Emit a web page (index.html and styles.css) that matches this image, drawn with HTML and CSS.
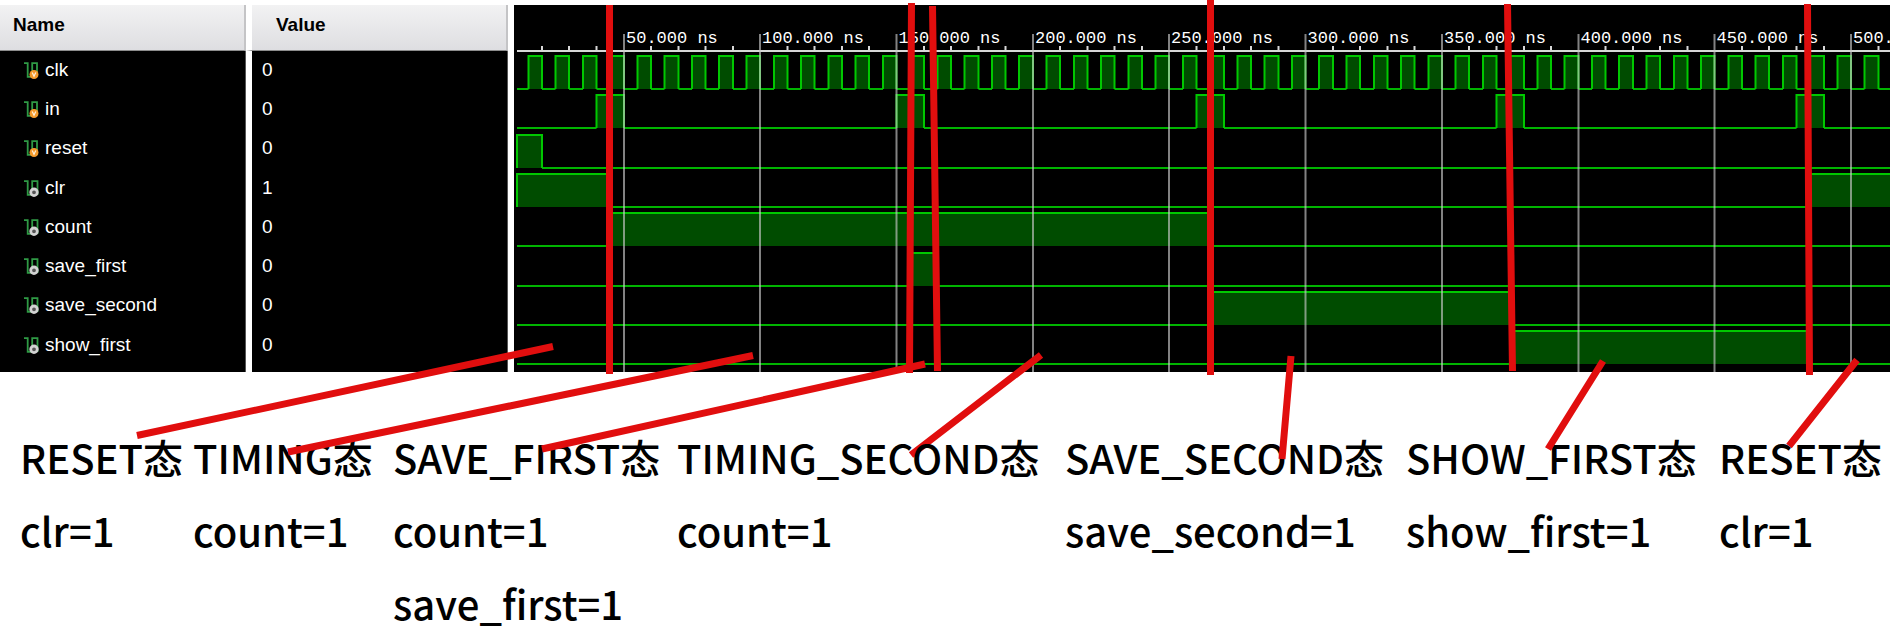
FILE: index.html
```html
<!DOCTYPE html>
<html lang="zh-CN">
<head>
<meta charset="utf-8">
<title>Waveform states</title>
<link rel="stylesheet" href="styles.css">
</head>
<body>
<svg class="symbols" aria-hidden="true">
  <symbol id="sig-in" viewBox="0 0 15 17">
    <path d="M0 1.2H3.7V14.8H8.2V1.2H13V15" fill="none" stroke="#2f9a45" stroke-width="1.8"/>
    <circle cx="10" cy="12.5" r="4.5" fill="#f59a2c"/>
    <path d="M8.2 10.5L10 14.3L11.8 10.5" fill="none" stroke="#fff0d8" stroke-width="1.2"/>
  </symbol>
  <symbol id="sig-reg" viewBox="0 0 15 17">
    <path d="M0 1.2H3.7V14.8H8.2V1.2H13.5V15" fill="none" stroke="#2f9a45" stroke-width="1.8"/>
    <circle cx="10" cy="12.3" r="3.3" fill="#555" stroke="#d2d2d2" stroke-width="2.8"/>
  </symbol>
</svg>
<main class="page">
  <section class="viewer">
    <table class="signals">
      <thead><tr><th scope="col">Name</th><th scope="col">Value</th></tr></thead>
      <tbody>
        <tr><td><svg class="icon"><use href="#sig-in"/></svg>clk</td><td>0</td></tr>
        <tr><td><svg class="icon"><use href="#sig-in"/></svg>in</td><td>0</td></tr>
        <tr><td><svg class="icon"><use href="#sig-in"/></svg>reset</td><td>0</td></tr>
        <tr><td><svg class="icon"><use href="#sig-reg"/></svg>clr</td><td>1</td></tr>
        <tr><td><svg class="icon"><use href="#sig-reg"/></svg>count</td><td>0</td></tr>
        <tr><td><svg class="icon"><use href="#sig-reg"/></svg>save_first</td><td>0</td></tr>
        <tr><td><svg class="icon"><use href="#sig-reg"/></svg>save_second</td><td>0</td></tr>
        <tr><td><svg class="icon"><use href="#sig-reg"/></svg>show_first</td><td>0</td></tr>
      </tbody>
    </table>
    <svg class="wave" id="wave" role="img" aria-label="Signal waveforms"></svg>
  </section>
  <section class="states">
    <div class="state"><p>RESET态</p><p>clr=1</p></div>
    <div class="state"><p>TIMING态</p><p>count=1</p></div>
    <div class="state"><p>SAVE_FIRST态</p><p>count=1</p><p>save_first=1</p></div>
    <div class="state front"><p>TIMING_SECOND态</p><p>count=1</p></div>
    <div class="state"><p>SAVE_SECOND态</p><p>save_second=1</p></div>
    <div class="state"><p>SHOW_FIRST态</p><p>show_first=1</p></div>
    <div class="state"><p>RESET态</p><p>clr=1</p></div>
  </section>
  <svg class="marks" aria-hidden="true">
    <path d="M609.5 5V374M911.5 3L909.5 373M932.5 6L937.5 371M1210.5 0V375M1507.5 4L1512.5 371M1807.5 4L1809.5 375"/>
    <path d="M553 346.5L137 435.5M753 355.5L288 452M925 364L542 449M1041 355L911 455M1291 356L1282 459M1603 361L1548 449M1857 360L1789 446"/>
  </svg>
</main>
<script src="wave.js"></script>
</body>
</html>
```

FILE: styles.css
```css
body {
  margin: 0;
  background: #fff;
  color: #000;
  font-family: "Liberation Sans", Arial, sans-serif;
}

p {
  margin: 0;
}

.symbols {
  display: none;
}

.page {
  position: relative;
  padding-top: 5px;
  overflow: hidden;
}

.viewer {
  display: flex;
  gap: 6px;
}

.signals {
  flex: none;
  border-collapse: separate;
  border-spacing: 0;
  font-size: 19px;
  line-height: 22px;
}

.signals th,
.signals td {
  box-sizing: border-box;
  width: 246px;
  height: 39px;
  padding: 0 0 1px 24px;
  text-align: left;
  vertical-align: middle;
}

.signals th {
  height: 46px;
  padding: 0 0 6px 13px;
  background: linear-gradient(#f2f2f3, #dedee1);
  border-right: 2px solid #c4c4c6;
  border-bottom: 1px solid #8c8c8c;
}

.signals td {
  background: #000;
  color: #fff;
  border-right: 1px solid #555;
}

.signals tr > :last-child {
  width: 262px;
  padding-left: 10px;
  border-left: 6px solid #fff;
}

.signals th:last-child {
  padding-left: 24px;
}

.signals tbody tr:nth-child(4n) td {
  height: 40px;
}

.signals tbody tr:last-child td {
  height: 47px;
  padding-bottom: 7px;
}

.icon {
  width: 15px;
  height: 17px;
  margin-right: 6px;
  vertical-align: -3px;
}

.wave {
  flex: 1;
  min-width: 0;
  height: 367px;
  background: #000;
}

.wave .fill {
  fill: #004c00;
}

.wave .trace {
  fill: none;
  stroke: #00c800;
  stroke-width: 2px;
}

.wave .trace.low {
  stroke: #00b400;
}

.wave .grid {
  stroke: #c8c8c8;
  stroke-opacity: 0.65;
  stroke-width: 2px;
}

.wave .axis {
  fill: none;
  stroke: #d8d8d8;
  stroke-width: 2px;
}

.wave text {
  fill: #fff;
  font-family: "Liberation Mono", "Courier New", monospace;
  font-size: 17px;
}

.states {
  display: grid;
  grid-template-columns: 173fr 200fr 284fr 388fr 341fr 313fr 171fr;
  padding: 49px 0 0 20px;
  font-family: "Noto Sans CJK SC", sans-serif;
  font-size: 40px;
  line-height: 73px;
  font-weight: 500;
}

.state {
  min-width: 0;
  white-space: nowrap;
}

.front {
  position: relative;
  z-index: 2;
}

.marks {
  position: absolute;
  top: 0;
  left: 0;
  z-index: 1;
  width: 100%;
  height: 100%;
  pointer-events: none;
}

.marks path {
  fill: none;
  stroke: #e10e0e;
  stroke-width: 7px;
}
```

FILE: wave.js
```js
const svg = document.getElementById('wave');
const SCALE = 30 / 11;
const START = 3;
const END = 540;
const x = t => Math.max(START, Math.round((t * SCALE - 26.6) * 2) / 2);

function add(name, attrs, text) {
  const el = document.createElementNS('http://www.w3.org/2000/svg', name);
  for (const key in attrs) el.setAttribute(key, attrs[key]);
  if (text) el.textContent = text;
  svg.appendChild(el);
}

const clk = [];
for (let t = 15; t < END; t += 10) clk.push([t, t + 5]);

// High intervals of each signal, in nanoseconds
const signals = [
  clk,
  [[40, 50], [150, 160], [260, 270], [370, 380], [480, 490]],
  [[0, 20]],
  [[0, 45], [485, END]],
  [[45, 265]],
  [[155, 165]],
  [[265, 375]],
  [[375, 485]]
];

signals.forEach((pulses, row) => {
  const top = Math.round(51 + row * 39.3);
  const low = top + 33;
  let high = '';
  let base = '';
  let from = 0;
  for (const [a, b] of pulses) {
    add('rect', { class: 'fill', x: x(a), y: top, width: x(b) - x(a), height: 33 });
    high += `M${x(a)} ${low}V${top}H${x(b)}V${low}`;
    base += `M${x(from)} ${low}H${x(a)}`;
    from = b;
  }
  base += `M${x(from)} ${low}H${x(END)}`;
  add('path', { class: 'trace low', d: base });
  add('path', { class: 'trace', d: high });
});

let axis = `M${START} 46H${x(END)}`;
for (let t = 20; t < END; t += 10) {
  if (t % 50) axis += `M${x(t)} 41V46`;
}
add('path', { class: 'axis', d: axis });

for (let t = 50; t <= 500; t += 50) {
  add('line', { class: 'grid', x1: x(t), x2: x(t), y1: 29, y2: 367 });
  add('text', { x: x(t) + 2, y: 38 }, `${t}.000 ns`);
}
```
